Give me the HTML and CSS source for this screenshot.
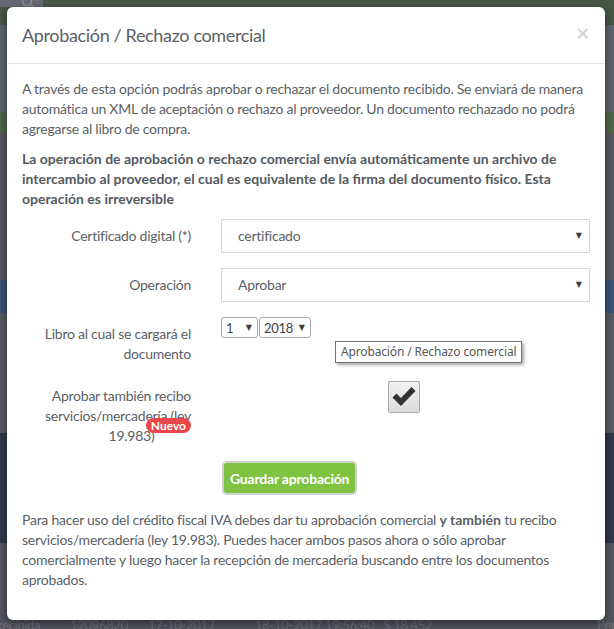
FILE: index.html
```html
<!DOCTYPE html>
<html lang="es">
<head>
<meta charset="utf-8">
<title>Aprobación / Rechazo comercial</title>
<link rel="stylesheet" href="styles.css">
</head>
<body>
<div class="topbar"><div class="search"><svg width="14" height="14" viewBox="0 0 14 14"><circle cx="6" cy="6" r="4.5" fill="none" stroke="#8a8d94" stroke-width="1.6"/><path d="M9.3 9.3 13 13" stroke="#8a8d94" stroke-width="1.8"/></svg></div></div>
<div class="modal">
  <div class="modal-header">
    <h4 class="modal-title">Aprobación / Rechazo comercial</h4>
    <span class="close">×</span>
  </div>
  <div class="modal-body">
    <p>A través de esta opción podrás aprobar o rechazar el documento recibido. Se enviará de manera automática un XML de aceptación o rechazo al proveedor. Un documento rechazado no podrá agregarse al libro de compra.</p>
    <p class="strong">La operación de aprobación o rechazo comercial envía automáticamente un archivo de intercambio al proveedor, el cual es equivalente de la firma del documento físico. Esta operación es irreversible</p>
    <div class="form-row">
      <label class="lbl">Certificado digital (*)</label>
      <div class="select"><span>certificado</span><span class="arrow">▼</span></div>
    </div>
    <div class="form-row">
      <label class="lbl">Operación</label>
      <div class="select"><span>Aprobar</span><span class="arrow">▼</span></div>
    </div>
    <div class="form-row">
      <label class="lbl">Libro al cual se cargará el documento</label>
      <div class="mini-selects">
        <div class="mini m1"><span>1</span><span class="arrow">▼</span></div>
        <div class="mini m2"><span>2018</span><span class="arrow">▼</span></div>
      </div>
    </div>
    <div class="form-row">
      <label class="lbl">Aprobar también recibo servicios/mercadería (ley 19.983) <span class="badge">Nuevo</span></label>
      <div class="check-wrap">
        <div class="checkbox"><svg width="30" height="30" viewBox="0 0 30 30"><polygon points="3.5,15.5 7.5,11.5 12,16 22.5,5 26.5,9 12,24" fill="#333"/></svg></div>
      </div>
    </div>
    <div class="form-row">
      <div></div>
      <div><button class="btn">Guardar aprobación</button></div>
    </div>
    <p class="last">Para hacer uso del crédito fiscal IVA debes dar tu aprobación comercial <b>y también</b> tu recibo servicios/mercadería (ley 19.983). Puedes hacer ambos pasos ahora o sólo aprobar comercialmente y luego hacer la recepción de mercadería buscando entre los documentos aprobados.</p>
  </div>
  <div class="tooltip">Aprobación / Rechazo comercial</div>
</div>
<div class="behind-row">
  <span>recibida</span><span>12096820</span><span>17-10-2017</span><span>18-10-2017 19:56:40</span><span>$ 18.452</span><span>Pen</span>
</div>
</body>
</html>
```
FILE: styles.css
```css
html, body {
  margin: 0;
  padding: 0;
}
body {
  width: 614px;
  height: 629px;
  overflow: hidden;
  font-family: Lato, "Liberation Sans", sans-serif;
  font-size: 14px;
  line-height: 20px;
  letter-spacing: -0.25px;
  background: linear-gradient(to bottom,
    #475846 0 25px,
    #5f636b 25px 112px,
    #4d6648 112px 133px,
    #55585f 133px 280px,
    #3a5376 280px 313px,
    #575a62 313px 433px,
    #2e394c 433px 543px,
    #53565e 543px);
}
.topbar {
  height: 7px;
  display: flex;
}
.search {
  width: 43px;
  height: 7px;
  background: #676a72;
  overflow: hidden;
  display: flex;
  justify-content: flex-end;
  align-items: flex-end;
}
.search svg {
  margin-right: 8px;
  margin-bottom: -2px;
}
.modal {
  position: relative;
  z-index: 2;
  width: 598px;
  margin-left: 7px;
  background: #fff;
  border-radius: 6px;
  box-shadow: 0 3px 9px rgba(0, 0, 0, .5);
  color: #5b5f66;
}
.modal-header {
  display: flex;
  justify-content: space-between;
  align-items: flex-start;
  padding: 15px;
  border-bottom: 1px solid #e5e5e5;
}
.modal-title {
  margin: 0;
  font-size: 18px;
  font-weight: normal;
  line-height: 26px;
  letter-spacing: -0.35px;
  color: #5b5f66;
}
.close {
  font-family: "DejaVu Sans", sans-serif;
  font-size: 18px;
  font-weight: bold;
  line-height: 1;
  color: #d2d2d2;
  margin-top: 2px;
}
.modal-body {
  padding: 15px 15px 20px;
}
p {
  margin: 0 0 10px;
}
.strong {
  font-weight: bold;
  letter-spacing: 0;
  color: #555a61;
}
b {
  letter-spacing: 0;
}
.last {
  margin-bottom: 10px;
}
.form-row {
  display: grid;
  grid-template-columns: 169px 369px;
  column-gap: 30px;
  margin-bottom: 15px;
}
.lbl {
  text-align: right;
  padding-top: 7px;
  font-weight: normal;
}
.badge {
  display: inline-block;
  position: relative;
  top: -11px;
  margin-left: -12px;
  background: #e9474a;
  color: #fff;
  font-size: 12px;
  font-weight: bold;
  letter-spacing: 0;
  line-height: 15px;
  padding: 0 5px;
  border-radius: 8px;
}
.select {
  height: 34px;
  box-sizing: border-box;
  border: 1px solid #d2d8dc;
  display: flex;
  align-items: center;
  justify-content: space-between;
  padding: 0 7px 0 16px;
}
.arrow {
  font-family: "DejaVu Sans", sans-serif;
  font-size: 8px;
  letter-spacing: 0;
  color: #3c3c3c;
}
.mini-selects {
  display: flex;
  gap: 1px;
  align-items: flex-start;
}
.mini {
  height: 21px;
  box-sizing: border-box;
  border: 1px solid #a9a9a9;
  border-radius: 3px;
  display: flex;
  align-items: center;
  justify-content: space-between;
  padding: 0 5px 0 4px;
  font-size: 13px;
  color: #444;
}
.m1 { width: 37px; }
.m2 { width: 52px; }
.check-wrap {
  display: flex;
  justify-content: center;
  padding-top: 2px;
  padding-right: 3px;
}
.checkbox {
  width: 32px;
  height: 32px;
  box-sizing: border-box;
  border: 1px solid #a8a8a8;
  border-radius: 2px;
  background: linear-gradient(#f2f2f2, #dcdcdc);
  display: flex;
  align-items: center;
  justify-content: center;
}
.btn {
  font-family: Lato, "Liberation Sans", sans-serif;
  font-size: 14px;
  font-weight: bold;
  letter-spacing: -0.2px;
  color: #fff;
  background: #80c342;
  border: 2px solid #cfd2cc;
  border-radius: 5px;
  height: 34px;
  padding: 0 6px;
  margin-left: 1px;
}
.tooltip {
  position: absolute;
  left: 328px;
  top: 334px;
  font-family: "Noto Sans", sans-serif;
  font-size: 12px;
  line-height: 16px;
  letter-spacing: -0.15px;
  color: #575757;
  background: #fff;
  border: 1px solid #767676;
  padding: 2px 5px;
  box-shadow: 2px 2px 3px rgba(0, 0, 0, .35);
  white-space: nowrap;
}
.behind-row {
  display: grid;
  grid-template-columns: 72px 78px 107px 128px 214px 1fr;
  margin-top: -5px;
  margin-left: -2px;
  color: #6d7078;
  font-size: 13px;
  line-height: 20px;
  letter-spacing: -0.3px;
  white-space: nowrap;
}
.behind-row span {
  overflow: hidden;
}
```
